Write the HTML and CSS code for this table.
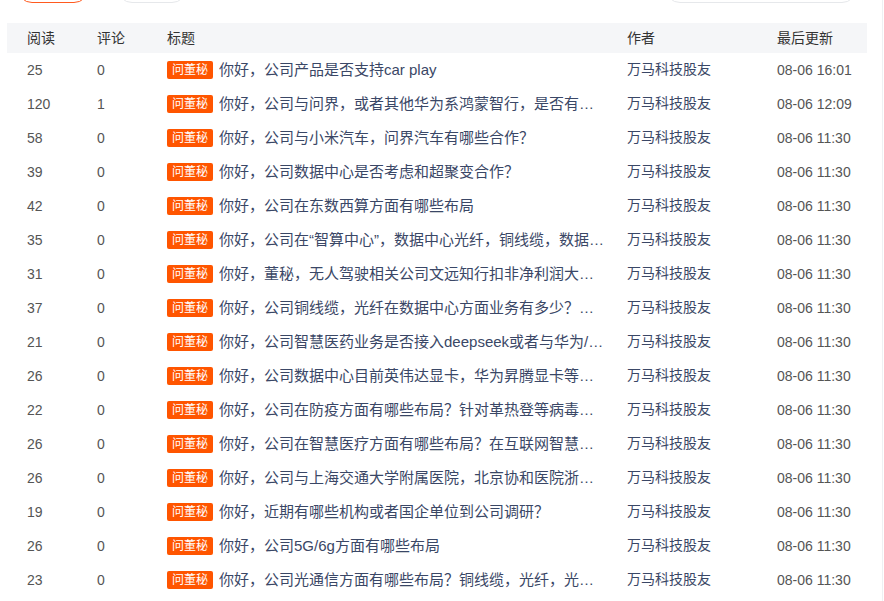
FILE: index.html
```html
<!DOCTYPE html>
<html lang="zh">
<head>
<meta charset="utf-8">
<link rel="stylesheet" href="styles.css">
</head>
<body>
<div class="page">
  <div class="toolbar">
    <span class="pill pill-active"></span>
    <span class="pill pill-plain"></span>
    <span class="spacer"></span>
    <span class="pill pill-search"></span>
  </div>
  <div class="table">
    <div class="row head">
      <div class="c c1">阅读</div><div class="c c2">评论</div><div class="c c3">标题</div><div class="c c4">作者</div><div class="c c5">最后更新</div>
    </div>
    <div class="row"><div class="c c1">25</div><div class="c c2">0</div><div class="c c3"><span class="tag">问董秘</span><span class="t">你好，公司产品是否支持car play</span></div><div class="c c4">万马科技股友</div><div class="c c5">08-06 16:01</div></div>
    <div class="row"><div class="c c1">120</div><div class="c c2">1</div><div class="c c3"><span class="tag">问董秘</span><span class="t">你好，公司与问界，或者其他华为系鸿蒙智行，是否有合作？</span></div><div class="c c4">万马科技股友</div><div class="c c5">08-06 12:09</div></div>
    <div class="row"><div class="c c1">58</div><div class="c c2">0</div><div class="c c3"><span class="tag">问董秘</span><span class="t">你好，公司与小米汽车，问界汽车有哪些合作？</span></div><div class="c c4">万马科技股友</div><div class="c c5">08-06 11:30</div></div>
    <div class="row"><div class="c c1">39</div><div class="c c2">0</div><div class="c c3"><span class="tag">问董秘</span><span class="t">你好，公司数据中心是否考虑和超聚变合作？</span></div><div class="c c4">万马科技股友</div><div class="c c5">08-06 11:30</div></div>
    <div class="row"><div class="c c1">42</div><div class="c c2">0</div><div class="c c3"><span class="tag">问董秘</span><span class="t">你好，公司在东数西算方面有哪些布局</span></div><div class="c c4">万马科技股友</div><div class="c c5">08-06 11:30</div></div>
    <div class="row"><div class="c c1">35</div><div class="c c2">0</div><div class="c c3"><span class="tag">问董秘</span><span class="t">你好，公司在“智算中心”，数据中心光纤，铜线缆，数据中心液冷方面有哪些布局？</span></div><div class="c c4">万马科技股友</div><div class="c c5">08-06 11:30</div></div>
    <div class="row"><div class="c c1">31</div><div class="c c2">0</div><div class="c c3"><span class="tag">问董秘</span><span class="t">你好，董秘，无人驾驶相关公司文远知行扣非净利润大幅亏损</span></div><div class="c c4">万马科技股友</div><div class="c c5">08-06 11:30</div></div>
    <div class="row"><div class="c c1">37</div><div class="c c2">0</div><div class="c c3"><span class="tag">问董秘</span><span class="t">你好，公司铜线缆，光纤在数据中心方面业务有多少？占比多少</span></div><div class="c c4">万马科技股友</div><div class="c c5">08-06 11:30</div></div>
    <div class="row"><div class="c c1">21</div><div class="c c2">0</div><div class="c c3"><span class="tag">问董秘</span><span class="t">你好，公司智慧医药业务是否接入deepseek或者与华为/阿里合作</span></div><div class="c c4">万马科技股友</div><div class="c c5">08-06 11:30</div></div>
    <div class="row"><div class="c c1">26</div><div class="c c2">0</div><div class="c c3"><span class="tag">问董秘</span><span class="t">你好，公司数据中心目前英伟达显卡，华为昇腾显卡等各占多少</span></div><div class="c c4">万马科技股友</div><div class="c c5">08-06 11:30</div></div>
    <div class="row"><div class="c c1">22</div><div class="c c2">0</div><div class="c c3"><span class="tag">问董秘</span><span class="t">你好，公司在防疫方面有哪些布局？针对革热登等病毒有哪些布局</span></div><div class="c c4">万马科技股友</div><div class="c c5">08-06 11:30</div></div>
    <div class="row"><div class="c c1">26</div><div class="c c2">0</div><div class="c c3"><span class="tag">问董秘</span><span class="t">你好，公司在智慧医疗方面有哪些布局？在互联网智慧医院方面</span></div><div class="c c4">万马科技股友</div><div class="c c5">08-06 11:30</div></div>
    <div class="row"><div class="c c1">26</div><div class="c c2">0</div><div class="c c3"><span class="tag">问董秘</span><span class="t">你好，公司与上海交通大学附属医院，北京协和医院浙江大学附属医院</span></div><div class="c c4">万马科技股友</div><div class="c c5">08-06 11:30</div></div>
    <div class="row"><div class="c c1">19</div><div class="c c2">0</div><div class="c c3"><span class="tag">问董秘</span><span class="t">你好，近期有哪些机构或者国企单位到公司调研？</span></div><div class="c c4">万马科技股友</div><div class="c c5">08-06 11:30</div></div>
    <div class="row"><div class="c c1">26</div><div class="c c2">0</div><div class="c c3"><span class="tag">问董秘</span><span class="t">你好，公司5G/6g方面有哪些布局</span></div><div class="c c4">万马科技股友</div><div class="c c5">08-06 11:30</div></div>
    <div class="row"><div class="c c1">23</div><div class="c c2">0</div><div class="c c3"><span class="tag">问董秘</span><span class="t">你好，公司光通信方面有哪些布局？铜线缆，光纤，光模块等</span></div><div class="c c4">万马科技股友</div><div class="c c5">08-06 11:30</div></div>
  </div>
</div>
</body>
</html>
```

FILE: styles.css
```css
html, body {
  margin: 0;
  padding: 0;
  background: #fff;
}
body {
  font-family: "Liberation Sans", "Noto Sans CJK SC", sans-serif;
  font-size: 14px;
  color: #555;
  overflow: hidden;
}
.page {
  width: 883px;
  height: 601px;
  border-right: 1px solid #eef0f3;
  box-sizing: border-box;
}
.toolbar {
  display: flex;
  align-items: flex-end;
  height: 3px;
  padding-left: 17px;
  padding-right: 25px;
  margin-bottom: 20px;
}
.pill {
  display: block;
  height: 30px;
  border-radius: 16px;
  box-sizing: border-box;
  flex: none;
}
.pill-active {
  width: 72px;
  border: 1px solid #ff5a1f;
}
.pill-plain {
  width: 70px;
  margin-left: 28px;
  border: 1px solid #e6e8eb;
}
.spacer { flex: 1; }
.pill-search {
  width: 192px;
  border: 1px solid #e6e8eb;
}
.table {
  margin-left: 7px;
  width: 860px;
}
.row {
  display: flex;
  height: 34px;
  align-items: center;
}
.row.head {
  height: 30px;
  background: #f5f6f8;
  color: #333;
}
.c {
  padding-left: 20px;
  box-sizing: border-box;
  white-space: nowrap;
  flex: none;
  line-height: 20px;
}
.c1 { width: 70px; }
.c2 { width: 70px; }
.c3 {
  width: 460px;
  padding-right: 2px;
  display: flex;
  align-items: center;
  overflow: hidden;
}
.c4 { width: 150px; }
.c5 { width: 110px; }
.row:not(.head) .c4 {
  margin-top: -2px;
}
.row:not(.head) .c4,
.row:not(.head) .t {
  color: #3a4766;
}
.tag {
  flex: none;
  display: inline-block;
  background: #ff5500;
  color: #fff;
  font-size: 12px;
  line-height: 18px;
  height: 18px;
  padding: 0 5px;
  border-radius: 2px;
  margin-right: 6px;
}
.t {
  font-size: 15px;
  line-height: 20px;
  overflow: hidden;
  text-overflow: ellipsis;
  min-width: 0;
  flex: 0 1 auto;
}
```
